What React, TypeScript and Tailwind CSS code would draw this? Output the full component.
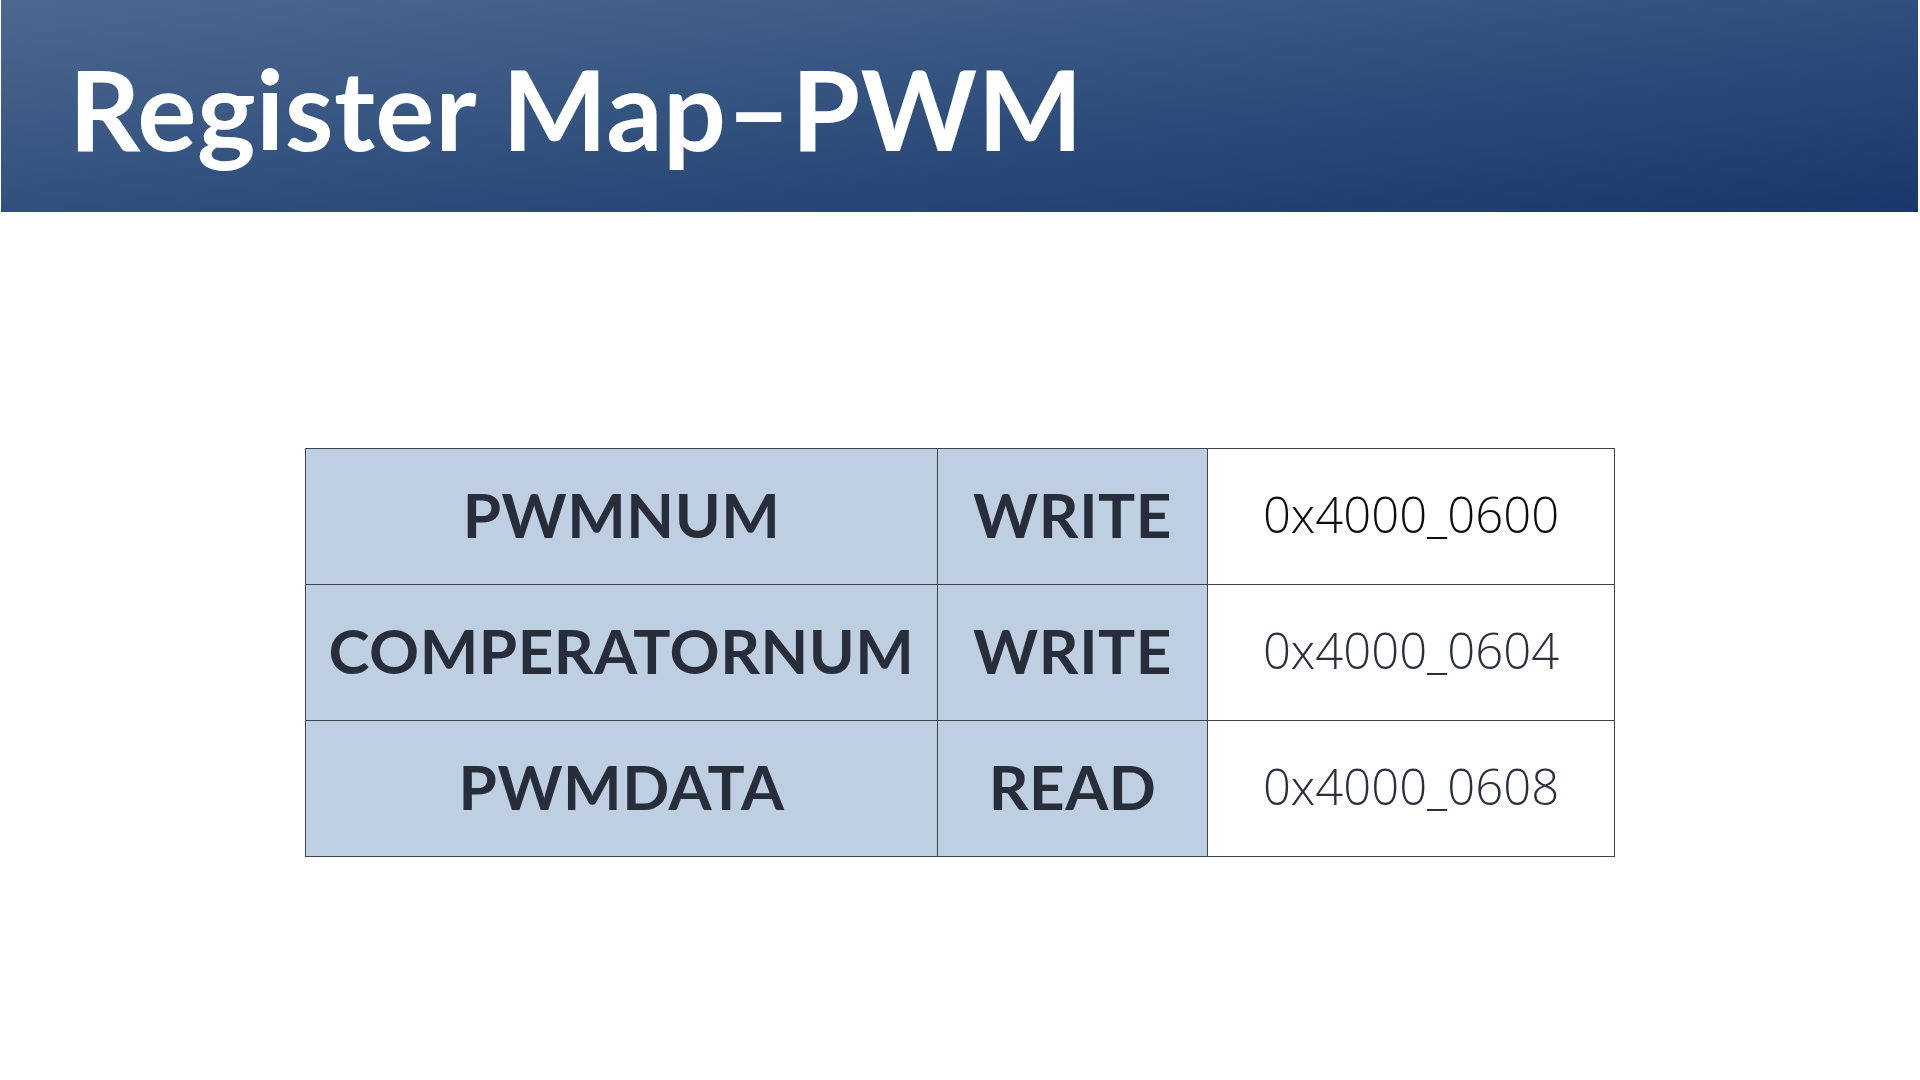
import React from "react";

const rows = [
  { name: "PWMNUM", mode: "WRITE", addr: "0x4000_0600", dark: true },
  { name: "COMPERATORNUM", mode: "WRITE", addr: "0x4000_0604", dark: false },
  { name: "PWMDATA", mode: "READ", addr: "0x4000_0608", dark: false },
];

export default function App() {
  return (
    <div className="w-[1920px] h-[1080px] bg-white overflow-hidden">
      <div className="ml-[1px] mr-[2px] h-[212px] bg-linear-to-br from-[#4b6990] to-[#19376a] flex items-center pl-[68px] pt-[4px]">
        <h1
          className="text-white text-[111px] font-bold leading-none tracking-[0.5px]"
          style={{ fontFamily: "Lato, 'Open Sans', sans-serif" }}
        >
          Register Map–PWM
        </h1>
      </div>
      <div className="flex justify-center pt-[236px]">
        <table className="border-collapse border border-[#3d4150]">
          <tbody>
            {rows.map((r) => (
              <tr key={r.name} className="h-[136px]">
                <td
                  className="w-[632px] bg-[#bfcfe2] border border-[#3d4150] text-center text-[#282d3a] text-[62px] font-bold tracking-[0.5px] p-0 pb-[4px]"
                  style={{ fontFamily: "Lato, 'Open Sans', sans-serif" }}
                >
                  {r.name}
                </td>
                <td
                  className="w-[270px] bg-[#bfcfe2] border border-[#3d4150] text-center text-[#282d3a] text-[62px] font-bold tracking-[0.5px] p-0 pb-[4px]"
                  style={{ fontFamily: "Lato, 'Open Sans', sans-serif" }}
                >
                  {r.mode}
                </td>
                <td
                  className={`w-[407px] bg-white border border-[#3d4150] text-center text-[49px] font-light p-0 pb-[4px] ${
                    r.dark ? "text-[#0d0d0d]" : "text-[#2b3040]"
                  }`}
                  style={{ fontFamily: "'Open Sans', sans-serif" }}
                >
                  {r.addr}
                </td>
              </tr>
            ))}
          </tbody>
        </table>
      </div>
    </div>
  );
}
